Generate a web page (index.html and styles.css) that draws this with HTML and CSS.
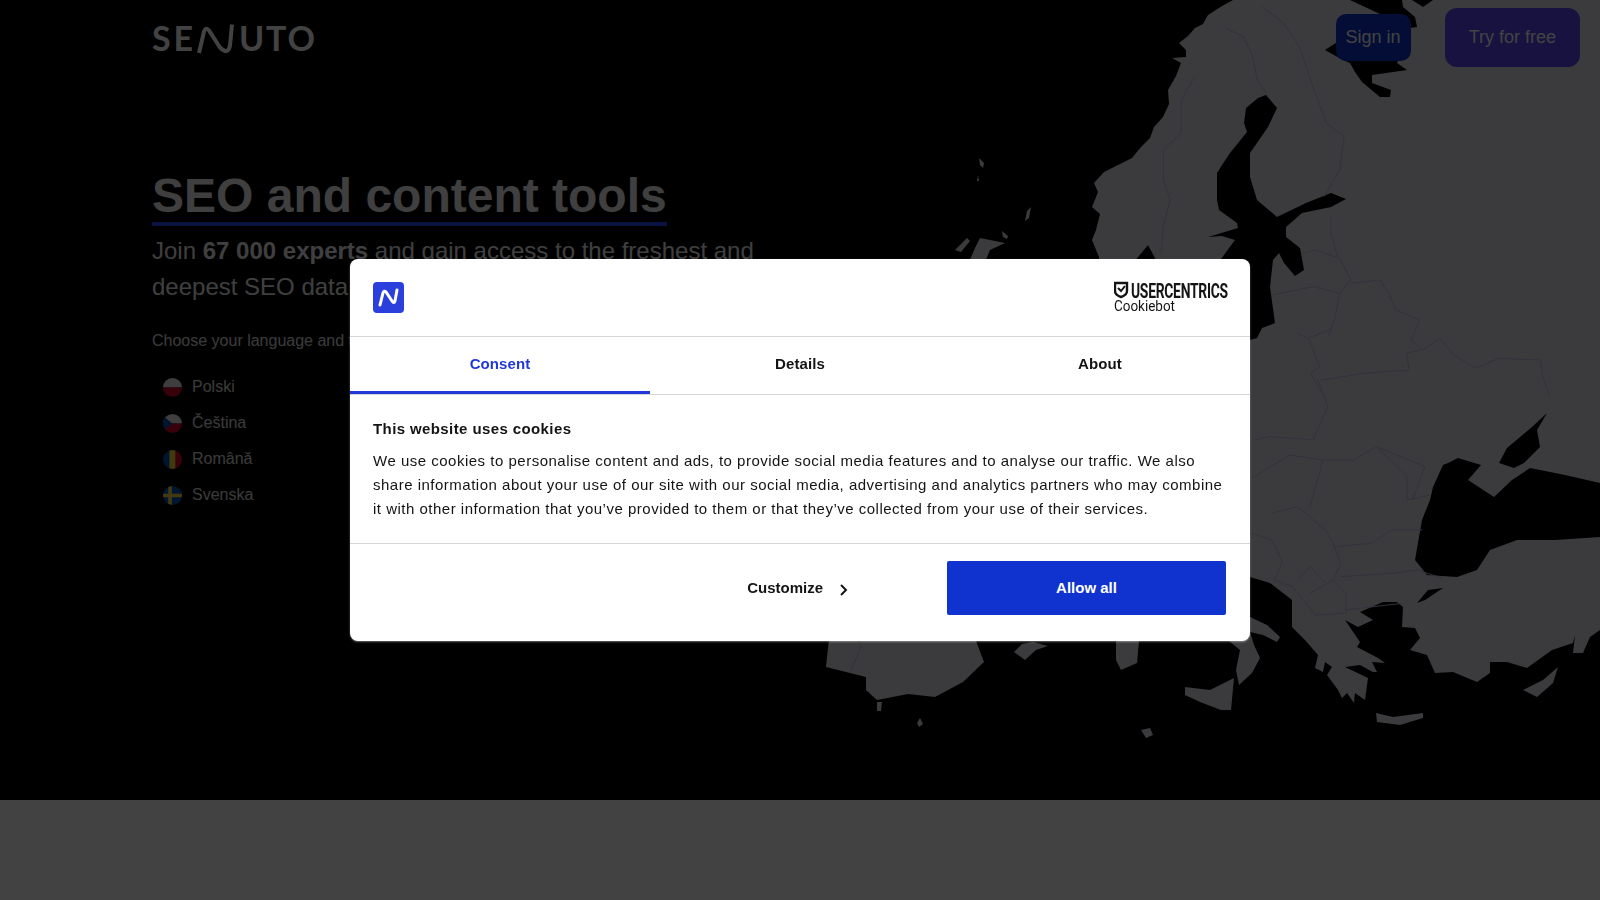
FILE: index.html
```html
<!DOCTYPE html>
<html lang="en">
<head>
    <meta charset="UTF-8">
    <meta name="viewport" content="width=device-width, initial-scale=1.0">
    <title>Senuto - SEO and content tools</title>
    <link rel="stylesheet" href="styles.css">
</head>
<body>
    <section class="hero">
        <svg class="map" viewBox="0 0 1600 800" width="1600" height="800" aria-hidden="true">
            <!-- land -->
            <g class="land">
                <path d="M1233,0 L1222,6 L1208,15 L1203,24 L1195,28 L1188,36 L1179,43 L1186,50 L1186,57 L1172,58 L1181,63 L1176,76 L1168,90 L1169,104 L1163,117 L1154,127 L1150,138 L1141,147 L1132,158 L1114,167 L1104,172 L1094,183 L1098,192 L1092,207 L1100,214 L1096,230 L1092,240 L1099,257 L1099,400 L1220,560 L1250,577 L1270,583 L1292,600 L1292,627 L1305,640 L1318,655 L1315,668 L1323,672 L1325,662 L1332,667 L1327,675 L1338,690 L1342,698 L1347,693 L1354,703 L1355,693 L1365,700 L1368,678 L1345,667 L1360,665 L1373,672 L1377,672 L1372,662 L1385,663 L1378,658 L1357,647 L1360,642 L1345,620 L1358,627 L1373,620 L1360,612 L1383,602 L1397,602 L1403,607 L1402,627 L1415,628 L1420,638 L1410,650 L1427,655 L1435,673 L1453,672 L1477,682 L1490,673 L1490,662 L1507,662 L1527,668 L1552,650 L1573,643 L1575,635 L1573,653 L1583,653 L1590,637 L1600,630 L1600,0 Z"/>
                <path d="M1229,641 L1250,617 L1267,625 L1280,637 L1277,642 L1263,635 L1250,632 L1254,645 L1260,658 L1252,673 L1239,685 L1236,670 L1240,650 Z"/>
                <path d="M1185,687 L1210,690 L1234,678 L1231,710 L1221,710 L1200,702 L1185,695 Z"/>
                <path d="M831,620 L976,620 L976,641 L984,662 L963,682 L935,697 L908,694 L877,700 L866,690 L866,677 L826,667 Z"/>
                <path d="M1014,652 L1022,644 L1033,642 L1048,646 L1036,650 L1025,660 Z"/>
                <path d="M1116,620 L1139,620 L1139,641 L1137,663 L1121,670 L1116,660 Z"/>
                <path d="M1376,713 L1393,717 L1423,713 L1423,718 L1400,725 L1377,722 Z"/>
                <path d="M1558,667 L1543,680 L1523,690 L1537,697 L1553,683 Z"/>
                <path d="M1141,730 L1150,728 L1153,735 L1146,738 Z"/>
                <path d="M877,702 L882,702 L881,711 L877,711 Z"/>
                <path d="M920,718 L923,724 L919,727 L917,723 Z"/>
                <path d="M979,158 L984,163 L983,168 L980,165 Z"/>
                <path d="M978,175 L979,181 L977,181 Z"/>
                <path d="M1031,207 L1029,218 L1025,221 L1027,211 Z"/>
                <path d="M1002,231 L1008,236 L1007,239 L1003,237 Z"/>
                <path d="M967,238 L970,241 L961,252 L955,250 Z"/>
                <path d="M980,238 L1005,243 L990,250 L985,262 L969,262 L975,248 Z"/>
            </g>
            <!-- seas cut out of the land -->
            <g class="sea">
                <path d="M1350,0 L1402,0 L1403,7 L1415,17 L1417,27 L1410,28 L1397,63 L1407,70 L1372,75 L1372,83 L1391,90 L1390,97 L1380,97 L1362,82 L1355,72 L1350,63 L1343,60 L1325,50 L1380,14 Z"/>
                <path d="M1412,0 L1423,7 L1433,0 Z"/>
                <path d="M1134,262 L1148,245 L1157,262 Z"/>
                <path d="M1266,95 L1258,98 L1246,108 L1244,123 L1247,132 L1230,153 L1222,165 L1217,173 L1217,200 L1219,210 L1237,223 L1238,228 L1208,237 L1222,236 L1235,240 L1221,259 L1221,320 L1250,340 L1257,338 L1262,328 L1275,323 L1270,287 L1273,260 L1279,253 L1284,263 L1295,276 L1304,270 L1300,248 L1286,237 L1286,227 L1302,213 L1331,207 L1346,199 L1331,193 L1306,203 L1277,217 L1257,200 L1250,177 L1250,153 L1268,127 L1277,108 Z"/>
                <path d="M1443,465 L1433,487 L1430,500 L1422,520 L1415,560 L1427,575 L1457,577 L1477,570 L1490,550 L1517,540 L1555,540 L1600,537 L1600,483 L1565,475 L1530,468 L1512,480 L1494,497 L1468,480 L1481,465 L1458,458 L1448,463 Z"/>
                <path d="M1547,413 L1532,427 L1507,448 L1499,463 L1514,468 L1524,463 L1540,447 L1537,430 Z"/>
                <path d="M1443,588 L1428,590 L1417,603 L1425,600 Z"/>
            </g>
            <!-- country borders -->
            <g class="borders" transform="translate(900 0) scale(.4464 .3333)">
                <path d="M730,85 L770,110 L790,170 L800,240 L820,280"/>
                <path d="M660,230 L630,300 L630,400 L590,450 L590,540 L605,600 L590,680 L585,760"/>
                <path d="M810,20 L860,70 L895,140 L925,260 L955,370 L995,410 L985,510 L950,590"/>
                <path d="M965,650 L965,700 L980,770"/>
                <path d="M900,760 L930,750 L985,775 L1010,840 L985,880 L975,950 L960,1010"/>
                <path d="M835,885 L925,860 L985,880"/>
                <path d="M1010,850 L1075,840 L1095,880 L1110,930 L1165,960 L1145,1020 L1170,1050 L1210,1015 L1240,1065 L1290,1105 L1340,1075 L1435,1080 L1440,1130 L1455,1190"/>
                <path d="M890,1000 L915,1015 L970,985"/>
                <path d="M915,1015 L940,1100 L920,1120 L945,1180"/>
                <path d="M945,1140 L1040,1120 L1140,1110 L1135,1060 L1165,1050"/>
            </g>
            <g class="borders" transform="translate(800 380) scale(.5102 .3333)">
                <path d="M1015,0 L1035,80 L1005,180"/>
                <path d="M890,180 L920,170 L1010,180"/>
                <path d="M885,295 L960,225 L1025,240 L1000,380"/>
                <path d="M1025,240 L1085,240 L1130,200 L1190,290 L1190,360 L1235,345"/>
                <path d="M1130,200 L1225,260 L1200,360"/>
                <path d="M885,460 L925,480 L945,545 L930,600 L965,620 L1010,705 L1070,700 L1070,640 L1045,600 L1060,550 L1045,490 L1030,450 L975,380 L925,400"/>
                <path d="M1045,500 L1120,490 L1160,450 L1220,450"/>
                <path d="M1060,590 L1160,580 L1210,570 L1260,595"/>
                <path d="M1000,560 L1030,610"/>
                <path d="M1000,560 L975,600"/>
                <path d="M1000,640 L1045,600"/>
                <path d="M1070,690 L1180,670"/>
                <path d="M115,782 L120,800 L100,870"/>
            </g>
        </svg>

        <header class="nav">
            <a class="logo" href="#">
                <svg width="164" height="44" viewBox="0 -5 164 44">
                    <text class="logo-text" x="0" y="30" textLength="41" lengthAdjust="spacing">SE</text>
                    <path class="logo-mark" d="M47,32 L52,10.5 Q54,5.5 57,9.5 L68,26.5 Q76,34.5 78,24.5 L80,3.5"/>
                    <text class="logo-text" x="87" y="30" textLength="76" lengthAdjust="spacing">UTO</text>
                </svg>
            </a>
            <div class="nav-actions">
                <a class="btn btn-signin" href="#">Sign in</a>
                <a class="btn btn-try" href="#">Try for free</a>
            </div>
        </header>

        <div class="hero-body">
            <h1><span>SEO and content tools</span></h1>
            <p class="lead">Join <strong>67 000 experts</strong> and gain access to the freshest and deepest SEO data</p>
            <p class="choose">Choose your language and try</p>
            <ul class="langs">
                <li>
                    <svg class="flag" viewBox="0 0 18 18"><rect width="18" height="9" fill="#f0f0f0"/><rect y="9" width="18" height="9" fill="#d80027"/></svg>
                    Polski
                </li>
                <li>
                    <svg class="flag" viewBox="0 0 18 18"><rect width="18" height="9" fill="#f0f0f0"/><rect y="9" width="18" height="9" fill="#d80027"/><path d="M0,2 L9,9 L0,16 Z" fill="#0052b4"/></svg>
                    Čeština
                </li>
                <li>
                    <svg class="flag" viewBox="0 0 18 18"><rect width="6" height="18" fill="#0052b4"/><rect x="6" width="6" height="18" fill="#ffda44"/><rect x="12" width="6" height="18" fill="#d80027"/></svg>
                    Română
                </li>
                <li>
                    <svg class="flag" viewBox="0 0 18 18"><rect width="18" height="18" fill="#0052b4"/><rect x="5" width="3.4" height="18" fill="#ffda44"/><rect y="7.3" width="18" height="3.4" fill="#ffda44"/></svg>
                    Svenska
                </li>
            </ul>
        </div>
    </section>
    <div class="below"></div>

    <div class="overlay"></div>

    <div class="dialog">
        <div class="dialog-head">
            <svg class="brand" viewBox="0 0 31 31">
                <rect width="31" height="31" rx="4" fill="#2a3fdc"/>
                <path d="M7,23 L10,11 Q11,8 13,10 L19,19 Q21,22 22,19 L24,8" fill="none" stroke="#fff" stroke-width="3" stroke-linecap="round"/>
            </svg>
            <svg class="cookiebot" width="114" height="40" viewBox="0 -4 114 40">
                <path d="M1,1 H13 V9 Q13,13 7,15 Q1,13 1,9 Z" fill="none" stroke="#141414" stroke-width="2.4"/>
                <path d="M4,6 L7,9 L11,4" fill="none" stroke="#141414" stroke-width="2"/>
                <text class="uc-name" transform="translate(17 15.5) scale(.66 1)" textLength="147">USERCENTRICS</text>
                <text class="uc-sub" x="0" y="29" textLength="61" lengthAdjust="spacingAndGlyphs">Cookiebot</text>
            </svg>
        </div>
        <nav class="tabs">
            <a class="tab active" href="#">Consent</a>
            <a class="tab" href="#">Details</a>
            <a class="tab" href="#">About</a>
        </nav>
        <div class="dialog-body">
            <h2>This website uses cookies</h2>
            <p>We use cookies to personalise content and ads, to provide social media features and to analyse our traffic. We also share information about your use of our site with our social media, advertising and analytics partners who may combine it with other information that you’ve provided to them or that they’ve collected from your use of their services.</p>
        </div>
        <div class="dialog-foot">
            <a class="customize" href="#">Customize
                <svg width="10" height="12" viewBox="0 0 10 12"><path d="M2,1 L7,6 L2,11" fill="none" stroke="#141414" stroke-width="2"/></svg>
            </a>
            <button class="allow">Allow all</button>
        </div>
    </div>
</body>
</html>
```

FILE: styles.css
```css
* {
    box-sizing: border-box;
}

body {
    margin: 0;
    height: 900px;
    overflow: hidden;
    font-family: 'Liberation Sans', Arial, sans-serif;
    background: #fff;
    color: #f2f2f2;
}

a {
    color: inherit;
    text-decoration: none;
}

.hero {
    position: relative;
    height: 800px;
    background: #000;
    overflow: hidden;
}

.below {
    height: 100px;
    background: #fff;
}

.map {
    position: absolute;
    top: 0;
    left: 0;
}

.land {
    fill: #e3e3ea;
}

.sea {
    fill: #000;
}

.borders {
    fill: none;
    stroke: #bcc4e6;
    stroke-width: 1;
}

.borders path {
    vector-effect: non-scaling-stroke;
}

.nav {
    position: relative;
    display: flex;
    justify-content: space-between;
    align-items: center;
    padding: 8px 20px 0 152px;
}

.logo {
    display: block;
    height: 44px;
}

.logo-text {
    font-family: Lato, sans-serif;
    font-weight: bold;
    font-size: 34px;
    fill: #fff;
}

.logo-mark {
    fill: none;
    stroke: #fff;
    stroke-width: 4;
}

.nav-actions {
    display: flex;
    align-items: center;
    gap: 34px;
}

.btn {
    font-size: 18px;
    display: block;
    color: #fff;
}

.btn-signin {
    background: #1133cc;
    padding: 13px 10px;
    line-height: 21px;
    border-radius: 10px;
}

.btn-try {
    background: #5845f2;
    padding: 19px 24px;
    line-height: 21px;
    border-radius: 12px;
}

.hero-body {
    position: relative;
    padding: 103px 0 0 152px;
    width: 780px;
}

h1 {
    margin: 0;
    font-size: 48px;
    line-height: 52px;
}

h1 span {
    display: inline-block;
    border-bottom: 4px solid #2646f5;
}

.lead {
    margin: 7px 0 0;
    font-size: 24px;
    line-height: 36px;
}

.choose {
    margin: 24px 0 0;
    font-size: 16px;
    line-height: 24px;
    color: #e0e0e0;
}

.langs {
    list-style: none;
    margin: 16px 0 0;
    padding: 0 0 0 10.5px;
    color: #e0e0e0;
}

.langs li {
    display: flex;
    align-items: center;
    gap: 10.5px;
    height: 36px;
    font-size: 16px;
}

.flag {
    width: 19px;
    height: 19px;
    border-radius: 50%;
}

.overlay {
    position: fixed;
    top: 0;
    left: 0;
    right: 0;
    bottom: 0;
    background: rgba(0, 0, 0, 0.74);
}

.dialog {
    position: fixed;
    top: 259px;
    left: 350px;
    width: 900px;
    height: 382px;
    background: #fff;
    color: #141414;
    border-radius: 8px;
    box-shadow: 0 1px 2px rgba(255, 255, 255, 0.4);
    font-size: 15px;
}

.dialog-head {
    display: flex;
    justify-content: space-between;
    align-items: center;
    height: 78px;
    padding: 0 22px 0 23px;
    border-bottom: 1px solid #d6d6d6;
}

.brand {
    width: 31px;
    height: 31px;
}

.tabs {
    display: flex;
    height: 58px;
    border-bottom: 1px solid #d6d6d6;
}

.tab {
    flex: 1;
    display: flex;
    align-items: center;
    justify-content: center;
    padding-bottom: 4px;
    font-weight: bold;
    letter-spacing: 0.1px;
}

.tab.active {
    color: #2138d8;
    padding-bottom: 1px;
    border-bottom: 3px solid #2138d8;
}

.dialog-body {
    height: 149px;
    padding: 24px 23px 0;
    border-bottom: 1px solid #d6d6d6;
}

h2 {
    margin: 0;
    font-size: 15px;
    line-height: 20px;
    letter-spacing: 0.4px;
}

.dialog-body p {
    margin: 10px 0 0;
    line-height: 24px;
    letter-spacing: 0.5px;
}

.uc-name {
    font-family: Roboto, sans-serif;
    font-weight: bold;
    font-size: 21px;
    fill: #141414;
}

.uc-sub {
    font-family: Roboto, sans-serif;
    font-size: 14px;
    fill: #141414;
}

.dialog-foot {
    display: flex;
    justify-content: flex-end;
    align-items: center;
    gap: 97px;
    padding: 17px 24px 0 0;
}

.customize {
    display: flex;
    align-items: center;
    gap: 16px;
    margin: 0 1px 2px 0;
    font-weight: bold;
}

.customize svg {
    margin-top: 5px;
}

.allow {
    width: 279px;
    height: 54px;
    padding: 0 0 2px;
    border: none;
    border-radius: 2px;
    background: #1032cf;
    color: #fff;
    font: bold 15px 'Liberation Sans', Arial, sans-serif;
}
```
